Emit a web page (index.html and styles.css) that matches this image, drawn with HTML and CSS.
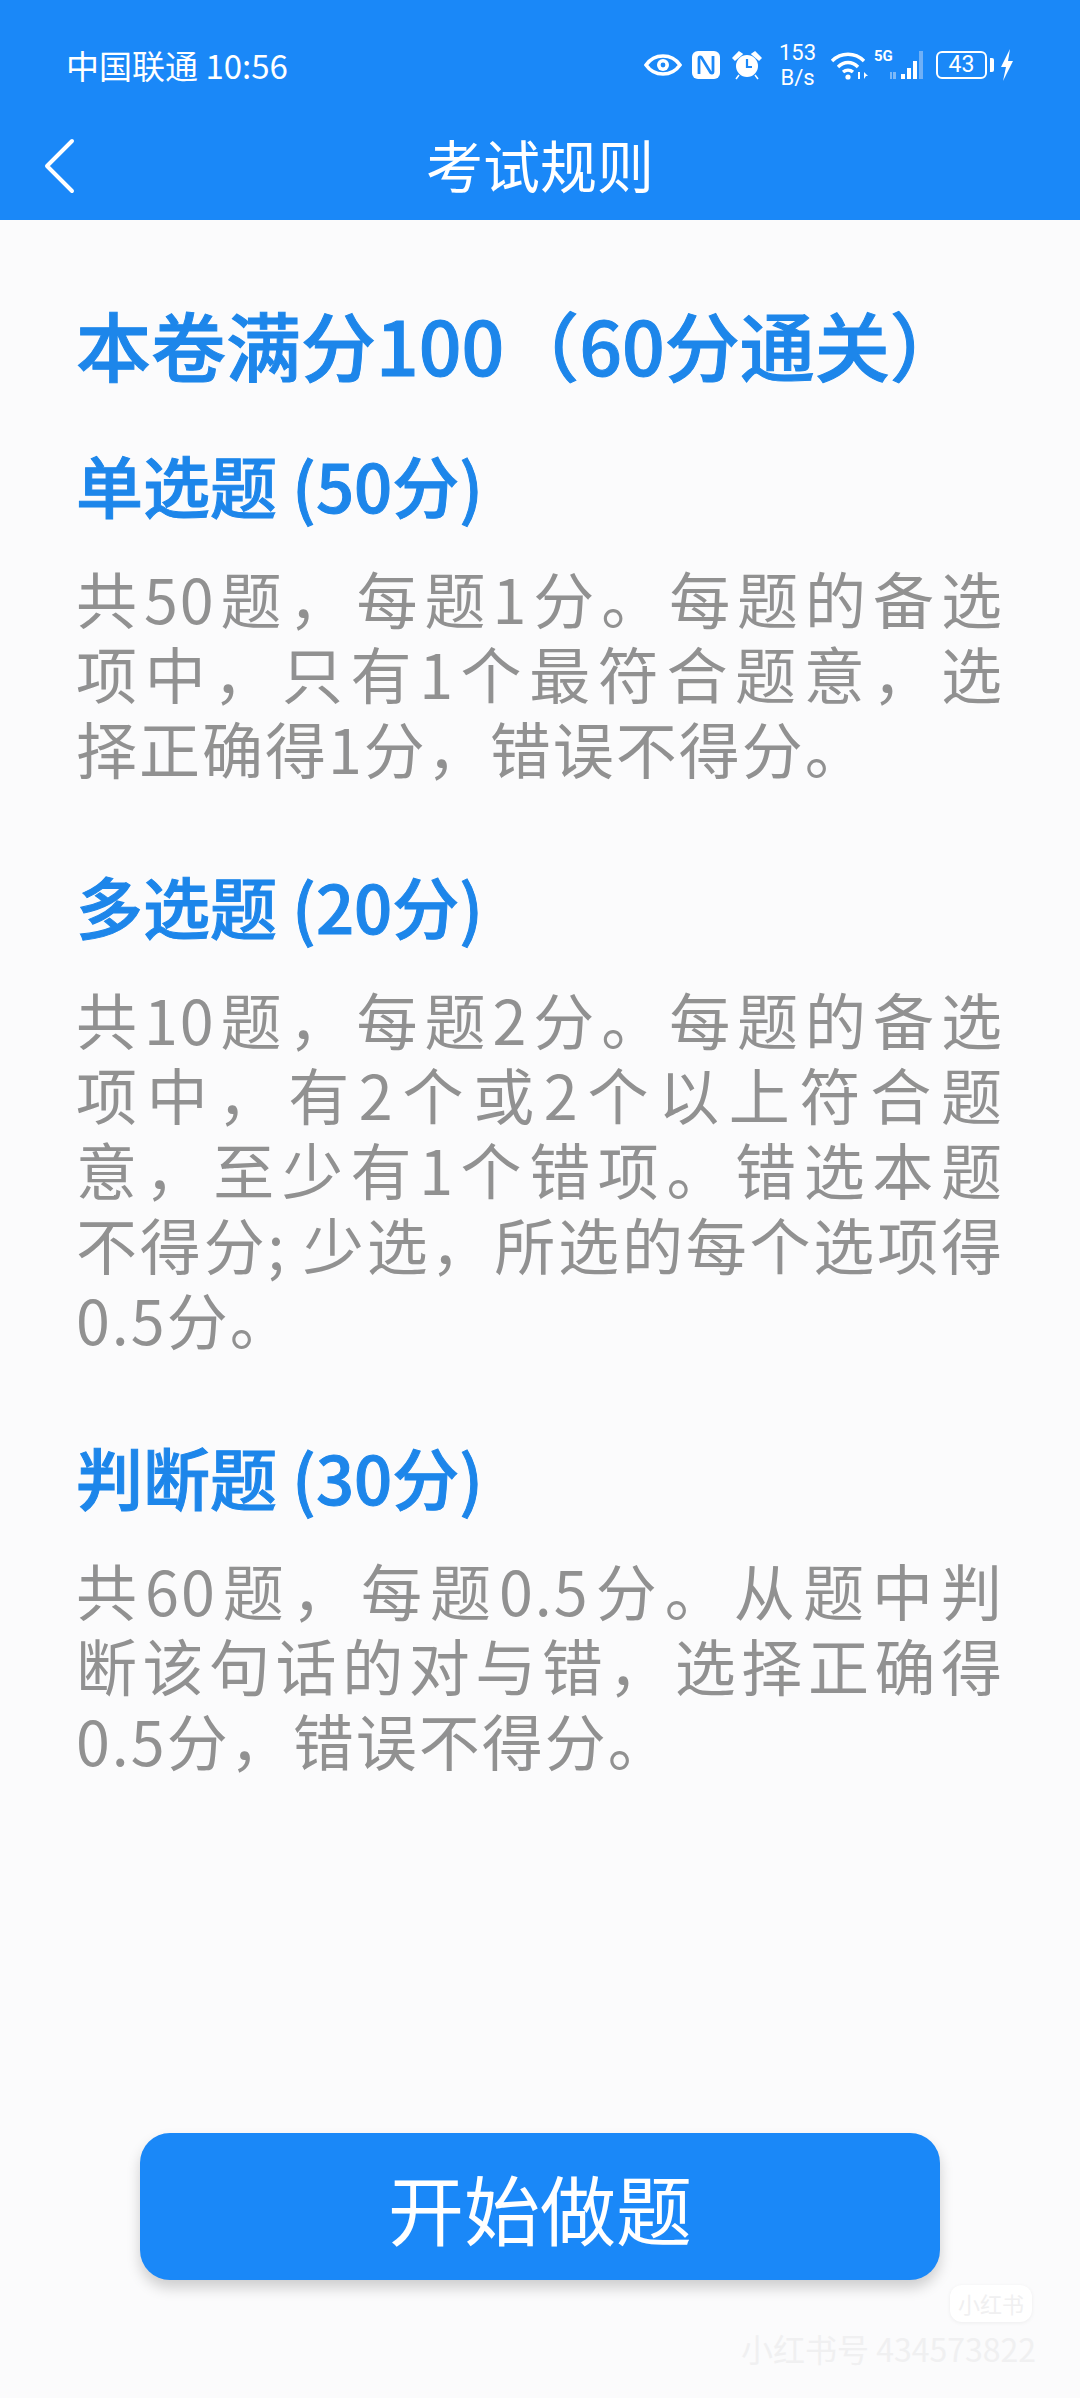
FILE: index.html
```html
<!DOCTYPE html>
<html lang="zh-CN">
<head>
  <meta charset="UTF-8">
  <meta name="viewport" content="width=device-width, initial-scale=1.0">
  <title>考试规则</title>
  <link rel="stylesheet" href="styles.css">
</head>
<body>
  <header class="top">
    <div class="status">
      <span class="carrier">中国联通 10:56</span>
      <div class="status-icons">
        <svg class="ic-eye" viewBox="0 0 38 22"><path d="M2 11C6.500 4.500 12 2 19 2S31.500 4.500 36 11C31.500 17.500 26 20 19 20S6.500 17.500 2 11Z" fill="none" stroke="#fff" stroke-width="3.600"/><circle cx="19" cy="11" r="6" fill="#fff"/><circle cx="19" cy="11" r="2.400" fill="#1a88f8"/></svg>
        <svg class="ic-nfc" viewBox="0 0 28 28"><rect width="28" height="28" rx="6" fill="#fff"/><path d="M7 23V7C7 5.500 8.500 5.500 9.500 6.500L18.500 21.500C19.500 22.500 21 22.500 21 21V5" fill="none" stroke="#1a88f8" stroke-width="2.800"/></svg>
        <svg class="ic-alarm" viewBox="0 0 30 30"><path d="M1 8 7 2 10 4 3 10ZM29 8 23 2 20 4 27 10ZM7 25 4 29M23 25 26 29" fill="#fff" stroke="#fff" stroke-width="1.500"/><circle cx="15" cy="16" r="11" fill="#fff"/><path d="M15 9V17H20" fill="none" stroke="#1a88f8" stroke-width="2.200"/></svg>
        <div class="speed"><span>153</span><span>B/s</span></div>
        <svg class="ic-wifi" viewBox="0 0 40 30"><path d="M2 11C11 2 25 2 34 11M8 17C14 11 22 11 28 17M13 22C16 19.500 20 19.500 23 22" fill="none" stroke="#fff" stroke-width="3.400"/><circle cx="18" cy="27" r="2.600" fill="#fff"/><path d="M28 22h2v7h-2zM34 22l4 4h-4zM34 29v-3h2z" fill="#fff"/></svg>
        <div class="signal">
          <span class="five-g">5G</span>
          <svg class="ic-bars" viewBox="0 0 36 30"><rect x="0" y="22" width="2" height="7" fill="#7db9f8"/><rect x="3" y="22" width="3" height="7" fill="#7db9f8"/><rect x="11" y="24" width="4" height="5" fill="#fff"/><rect x="17" y="18" width="4" height="11" fill="#fff"/><rect x="23" y="11" width="4" height="18" fill="#fff"/><rect x="29" y="1" width="4" height="28" fill="#6fb0f7"/></svg>
        </div>
        <div class="battery"><span class="battery-box">43</span><span class="battery-nub"></span></div>
        <svg class="ic-bolt" viewBox="0 0 14 32"><path d="M10 0 1 18H6L3 32 13 12H8Z" fill="#fff"/></svg>
      </div>
    </div>
    <div class="nav">
      <svg class="back" viewBox="0 0 32 56"><path d="M29 3 4 28 29 53" fill="none" stroke="#fff" stroke-width="4" stroke-linecap="round" stroke-linejoin="round"/></svg>
      <h2 class="nav-title">考试规则</h2>
    </div>
  </header>

  <main class="rules">
    <h1>本卷满分100（60分通关）</h1>

    <section class="rule">
      <h3>单选题 (50分)</h3>
      <p>
        <span class="line">共50题，每题1分。每题的备选</span>
        <span class="line">项中，只有1个最符合题意，选</span>
        <span class="line end">择正确得1分，错误不得分。</span>
      </p>
    </section>

    <section class="rule">
      <h3>多选题 (20分)</h3>
      <p>
        <span class="line">共10题，每题2分。每题的备选</span>
        <span class="line">项中，有2个或2个以上符合题</span>
        <span class="line">意，至少有1个错项。错选本题</span>
        <span class="line">不得分; 少选，所选的每个选项得</span>
        <span class="line end">0.5分。</span>
      </p>
    </section>

    <section class="rule">
      <h3>判断题 (30分)</h3>
      <p>
        <span class="line">共60题，每题0.5分。从题中判</span>
        <span class="line">断该句话的对与错，选择正确得</span>
        <span class="line end">0.5分，错误不得分。</span>
      </p>
    </section>
  </main>

  <footer class="bottom">
    <button class="start">开始做题</button>
  </footer>

  <div class="watermark">
    <span class="wm-logo">小红书</span>
    <span class="wm-id">小红书号 434573822</span>
  </div>
</body>
</html>
```

FILE: styles.css
```css
* {
  box-sizing: border-box;
}

html, body {
  margin: 0;
  padding: 0;
}

body {
  position: relative;
  width: 1080px;
  height: 2398px;
  overflow: hidden;
  display: flex;
  flex-direction: column;
  background-color: #fbfbfc;
  font-family: "Noto Sans CJK SC", "Noto Sans", sans-serif;
}

/* top blue area */
.top {
  height: 220px;
  background-color: #1a88f8;
  color: #fff;
}

.status {
  height: 110px;
  padding: 20px 66px 0 66px;
  display: flex;
  justify-content: space-between;
  align-items: center;
}

.carrier {
  font-size: 33px;
}

.status-icons {
  display: flex;
  align-items: center;
}

.ic-eye { width: 38px; height: 22px; margin-right: 10px; }
.ic-nfc { width: 28px; height: 28px; margin-right: 12px; }
.ic-alarm { width: 30px; height: 30px; margin-right: 18px; }
.ic-wifi { width: 40px; height: 30px; margin: 0 4px 0 15px; }
.ic-bolt { width: 14px; height: 32px; margin-left: 6px; }

.speed {
  display: flex;
  flex-direction: column;
  align-items: center;
  width: 35px;
  font-size: 22px;
  line-height: 25px;
  font-family: Roboto, sans-serif;
}

.signal {
  position: relative;
  width: 52px;
  height: 30px;
}

.five-g {
  position: absolute;
  left: 0;
  top: -2px;
  font-size: 15px;
  line-height: 16px;
  font-weight: 700;
  font-family: Roboto, sans-serif;
}

.ic-bars {
  position: absolute;
  right: 0;
  top: 0;
  width: 36px;
  height: 30px;
}

.battery {
  display: flex;
  align-items: center;
  margin-left: 10px;
}

.battery-box {
  width: 51px;
  height: 28px;
  border: 2.5px solid #fff;
  border-radius: 6px;
  font-size: 23px;
  line-height: 23px;
  text-align: center;
  font-family: Roboto, sans-serif;
}

.battery-nub {
  width: 4px;
  height: 14px;
  margin-left: 3px;
  background-color: #fff;
  border-radius: 0 2px 2px 0;
}

.nav {
  position: relative;
  height: 110px;
  padding-bottom: 4px;
  display: flex;
  align-items: center;
  justify-content: center;
}

.back {
  position: absolute;
  left: 43px;
  top: 28px;
  width: 32px;
  height: 56px;
}

.nav-title {
  margin: 0;
  font-size: 57px;
  font-weight: 400;
  line-height: 1;
}

/* rules text */
.rules {
  padding: 74px 76px 0;
}

h1 {
  margin: 0 0 48px;
  font-size: 75px;
  line-height: 100px;
  font-weight: 500;
  color: #1d86ea;
  white-space: nowrap;
  -webkit-text-stroke: 1px #1d86ea;
}

.rule {
  margin-bottom: 78px;
}

.rule h3 {
  margin: 0 0 34px;
  font-size: 67px;
  line-height: 84px;
  font-weight: 500;
  color: #1d86ea;
  -webkit-text-stroke: 1px #1d86ea;
}

.rule p {
  margin: 0;
  font-size: 61px;
  line-height: 75px;
  letter-spacing: 2px;
  color: #919191;
}

.line {
  display: block;
  text-align: justify;
  text-align-last: justify;
}

.line.end {
  text-align-last: left;
}

/* start button */
.bottom {
  margin-top: auto;
  padding-bottom: 118px;
  display: flex;
  justify-content: center;
}

.start {
  width: 800px;
  height: 147px;
  border: 0;
  border-radius: 30px;
  background-color: #1a88f8;
  color: #fff;
  font-family: inherit;
  font-size: 76px;
  box-shadow: 0 8px 14px rgba(0, 0, 0, 0.18);
}

/* faint watermark over the corner */
.watermark {
  position: absolute;
  right: 44px;
  bottom: 32px;
  display: flex;
  flex-direction: column;
  align-items: flex-end;
  color: #f0f0f1;
}

.wm-logo {
  width: 82px;
  height: 37px;
  margin: 0 4px 8px 0;
  border-radius: 12px;
  background-color: #fff;
  box-shadow: 0 1px 4px rgba(0, 0, 0, 0.06);
  font-size: 22px;
  line-height: 37px;
  text-align: center;
}

.wm-id {
  font-size: 32px;
  line-height: 36px;
  white-space: nowrap;
}
```
